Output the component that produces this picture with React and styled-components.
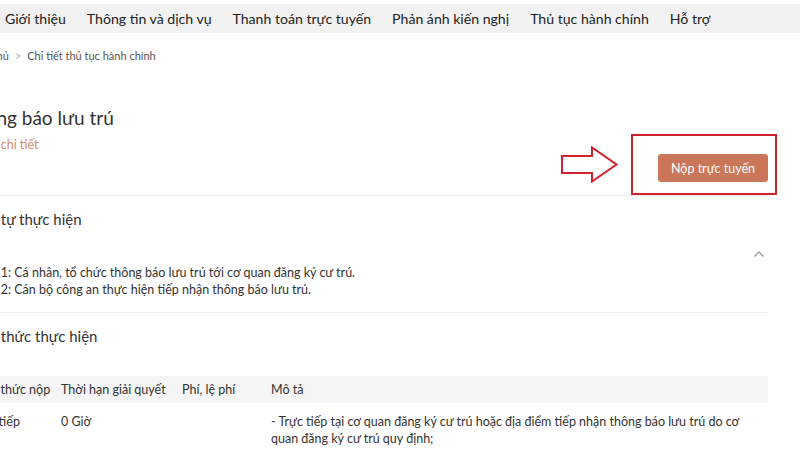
import React from 'react';
import styled, { createGlobalStyle } from 'styled-components';

const GlobalStyle = createGlobalStyle`
  body {
    margin: 0;
    background: #ffffff;
    font-family: Lato, "Open Sans", "Liberation Sans", sans-serif;
    color: #333333;
  }
`;

const Page = styled.div`
  width: 800px;
  height: 450px;
  overflow: hidden;
`;

const NavBar = styled.nav`
  margin-top: 4px;
  height: 29px;
  background: #f2f2f2;
  display: flex;
  align-items: center;
  gap: 21px;
  padding-left: 5px;
`;

const NavItem = styled.div`
  font-size: 14.1px;
  color: #222222;
  white-space: nowrap;
`;

const Main = styled.main`
  margin-left: -36px;
  width: 804px;
`;

const Breadcrumb = styled.div`
  margin: 15px 0 0 -2px;
  font-size: 11px;
  line-height: 16px;
  color: #555555;
  display: flex;
  gap: 6px;
`;

const Sep = styled.span`
  color: #aaaaaa;
`;

const Header = styled.section`
  margin-top: 41px;
  display: flex;
  justify-content: space-between;
  border-bottom: 1px solid #ececec;
`;

const TitleBlock = styled.div`
  display: flex;
  flex-direction: column;
  gap: 6px;
`;

const Title = styled.h1`
  margin: 0;
  font-size: 19px;
  line-height: 26px;
  font-weight: 400;
  color: #333333;
`;

const DetailLink = styled.a`
  margin-left: 9px;
  font-size: 12.5px;
  line-height: 16px;
  color: #d48a70;
  text-decoration: none;
`;

const Actions = styled.div`
  padding-top: 29px;
  display: flex;
  align-items: center;
  gap: 13px;
  margin-right: -9px;
`;

const Highlight = styled.div`
  width: 146px;
  height: 61px;
  box-sizing: border-box;
  border: 2px solid #cf2330;
  display: flex;
  align-items: flex-start;
  justify-content: flex-end;
  padding: 18px 7px 0 0;
`;

const SubmitButton = styled.button`
  width: 110px;
  height: 28px;
  border: none;
  border-radius: 3px;
  background: #c97659;
  color: #ffffff;
  font-family: inherit;
  font-size: 12.5px;
`;

const Section = styled.section`
  padding: 13px 0 14px;
  border-bottom: ${({ last }) => (last ? 'none' : '1px solid #ececec')};
`;

const SectionTitle = styled.h2`
  margin: 0;
  font-size: 15px;
  line-height: 20px;
  font-weight: 400;
  color: #333333;
`;

const ToggleRow = styled.div`
  height: 35px;
  box-sizing: border-box;
  display: flex;
  align-items: flex-end;
  justify-content: flex-end;
  padding: 0 3px 6px 0;
`;

const StepText = styled.div`
  padding-left: 4px;
  font-size: 12.5px;
  line-height: 17px;
  color: #333333;
`;

const Table = styled.div`
  margin-top: 30px;
  display: grid;
  grid-template-columns: 90px 121px 89px 1fr;
  font-size: 12.5px;
  line-height: 17px;
  color: #333333;
`;

const HeadCell = styled.div`
  background: #f5f5f5;
  height: 27px;
  display: flex;
  align-items: center;
  padding-left: 7px;
  white-space: nowrap;
`;

const Cell = styled.div`
  padding: 10px 0 0 7px;
`;

const Arrow = () => (
  <svg width="57" height="37" viewBox="0 0 57 37">
    <path
      d="M1 10 H31 V1.5 L55.5 18.5 L31 35.5 V27 H1 Z"
      fill="#ffffff"
      stroke="#cf2330"
      strokeWidth="2"
      strokeLinejoin="miter"
    />
  </svg>
);

const ChevronUp = () => (
  <svg width="12" height="8" viewBox="0 0 12 8">
    <polyline points="1.5,6.5 6,2 10.5,6.5" fill="none" stroke="#999999" strokeWidth="1.3" />
  </svg>
);

const navItems = [
  'Giới thiệu',
  'Thông tin và dịch vụ',
  'Thanh toán trực tuyến',
  'Phản ánh kiến nghị',
  'Thủ tục hành chính',
  'Hỗ trợ',
];

export default function App() {
  return (
    <Page>
      <GlobalStyle />
      <NavBar>
        {navItems.map((item) => (
          <NavItem key={item}>{item}</NavItem>
        ))}
      </NavBar>
      <Main>
        <Breadcrumb>
          <span>Trang chủ</span>
          <Sep>&gt;</Sep>
          <span>Chi tiết thủ tục hành chính</span>
        </Breadcrumb>
        <Header>
          <TitleBlock>
            <Title>Thông báo lưu trú</Title>
            <DetailLink href="#">Xem chi tiết</DetailLink>
          </TitleBlock>
          <Actions>
            <Arrow />
            <Highlight>
              <SubmitButton>Nộp trực tuyến</SubmitButton>
            </Highlight>
          </Actions>
        </Header>
        <Section>
          <SectionTitle>Trình tự thực hiện</SectionTitle>
          <ToggleRow>
            <ChevronUp />
          </ToggleRow>
          <StepText>Bước 1: Cá nhân, tổ chức thông báo lưu trú tới cơ quan đăng ký cư trú.</StepText>
          <StepText>Bước 2: Cán bộ công an thực hiện tiếp nhận thông báo lưu trú.</StepText>
        </Section>
        <Section last>
          <SectionTitle>Cách thức thực hiện</SectionTitle>
          <Table>
            <HeadCell>Hình thức nộp</HeadCell>
            <HeadCell>Thời hạn giải quyết</HeadCell>
            <HeadCell>Phí, lệ phí</HeadCell>
            <HeadCell>Mô tả</HeadCell>
            <Cell>Trực tiếp</Cell>
            <Cell>0 Giờ</Cell>
            <Cell />
            <Cell>
              - Trực tiếp tại cơ quan đăng ký cư trú hoặc địa điểm tiếp nhận thông báo lưu trú do cơ quan
              đăng ký cư trú quy định;
            </Cell>
          </Table>
        </Section>
      </Main>
    </Page>
  );
}
